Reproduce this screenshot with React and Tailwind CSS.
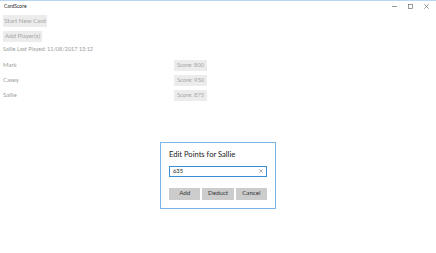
import React from "react";

export default function App() {
  const players = [
    { name: "Mark", score: 800 },
    { name: "Casey", score: 950 },
    { name: "Sallie", score: 875 },
  ];
  return (
    <div
      className="relative w-[436px] h-[253px] bg-white overflow-hidden border-t border-[#b9d7f1]"
      style={{ fontFamily: 'Lato, "Open Sans", sans-serif' }}
    >
      <div className="flex items-center h-[11px] pl-[4px]">
        <span className="text-[5px] text-[#222] leading-none">CardScore</span>
        <div className="ml-auto flex items-center h-full">
          <div className="w-[16px] flex justify-center">
            <svg width="5" height="5" viewBox="0 0 5 5"><path d="M0 2.5H5" stroke="#555" strokeWidth="0.6" /></svg>
          </div>
          <div className="w-[16px] flex justify-center">
            <svg width="5" height="5" viewBox="0 0 5 5"><rect x="0.5" y="0.5" width="4" height="4" fill="none" stroke="#555" strokeWidth="0.6" /></svg>
          </div>
          <div className="w-[18px] flex justify-center pr-[2px]">
            <svg width="5" height="5" viewBox="0 0 5 5"><path d="M0.3 0.3L4.7 4.7M4.7 0.3L0.3 4.7" stroke="#555" strokeWidth="0.6" /></svg>
          </div>
        </div>
      </div>
      <div className="flex flex-col items-start pl-[3px] mt-[3px]">
        <div className="h-[12px] w-[44px] bg-[#ececec] flex items-center justify-center text-[6.2px] text-[#a6a6a6] leading-none">
          Start New Card
        </div>
        <div className="h-[11px] w-[39px] bg-[#ececec] flex items-center justify-center text-[6.2px] text-[#a6a6a6] leading-none mt-[4px]">
          Add Player(s)
        </div>
        <div className="text-[5.5px] text-[#9b9b9b] leading-none mt-[5px]">
          Sallie Last Played: 11/08/2017 13:12
        </div>
        <div className="flex flex-col gap-[4px] mt-[7px] w-full">
          {players.map((p) => (
            <div key={p.name} className="flex items-center h-[11px]">
              <span className="w-[171px] text-[6px] text-[#9b9b9b] leading-none">{p.name}</span>
              <div className="h-[11px] w-[33px] bg-[#ececec] flex items-center justify-center text-[5.8px] text-[#a6a6a6] leading-none">
                Score: {p.score}
              </div>
            </div>
          ))}
        </div>
      </div>

      <div className="absolute left-[160px] top-[141px] w-[116px] h-[67px] border border-[#7bb6e6] bg-white px-[8px] pt-[8px]">
        <div className="text-[7.6px] text-[#222] leading-none">Edit Points for Sallie</div>
        <div className="mt-[7px] h-[11px] w-[98px] border border-[#3a8ed6] flex items-center pl-[3px] pr-[3px]">
          <span className="text-[5.8px] text-[#222] leading-none">635</span>
          <svg className="ml-auto" width="4" height="4" viewBox="0 0 4 4"><path d="M0.3 0.3L3.7 3.7M3.7 0.3L0.3 3.7" stroke="#555" strokeWidth="0.5" /></svg>
        </div>
        <div className="mt-[11px] flex gap-[2px]">
          {["Add", "Deduct", "Cancel"].map((b) => (
            <div key={b} className="h-[12px] w-[32px] bg-[#cccccc] flex items-center justify-center text-[6.2px] text-[#333] leading-none">
              {b}
            </div>
          ))}
        </div>
      </div>
    </div>
  );
}
